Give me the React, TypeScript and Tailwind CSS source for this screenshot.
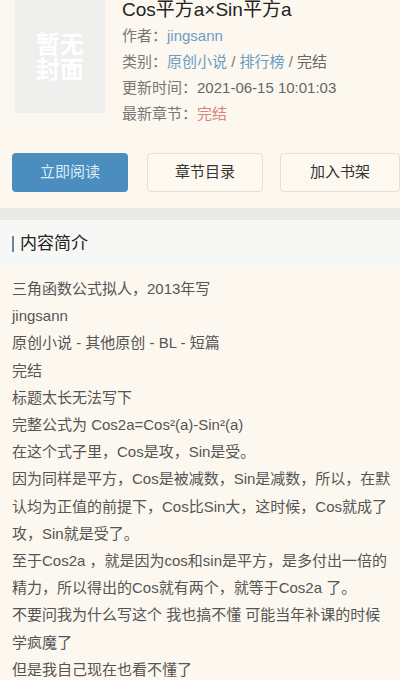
const lines = [
  "三角函数公式拟人，2013年写",
  "jingsann",
  "原创小说 - 其他原创 - BL - 短篇",
  "完结",
  "标题太长无法写下",
  "完整公式为 Cos2a=Cos²(a)-Sin²(a)",
  "在这个式子里，Cos是攻，Sin是受。",
  "因为同样是平方，Cos是被减数，Sin是减数，所以，在默认均为正值的前提下，Cos比Sin大，这时候，Cos就成了攻，Sin就是受了。",
  "至于Cos2a ，就是因为cos和sin是平方，是多付出一倍的精力，所以得出的Cos就有两个，就等于Cos2a 了。",
  "不要问我为什么写这个 我也搞不懂 可能当年补课的时候学疯魔了",
  "但是我自己现在也看不懂了",
];

export default function App() {
  return (
    <div
      className="w-[400px] h-[680px] overflow-hidden bg-[#fcf8ef]"
      style={{ fontFamily: '"Liberation Sans", "Noto Sans CJK SC", sans-serif' }}
    >
      {/* book info */}
      <div className="flex gap-[17px] pl-[15px]">
        <div className="w-[90px] h-[113px] bg-[#efefed] flex flex-col items-center justify-center text-white font-bold text-[24px] leading-[25px]">
          <span>暂无</span>
          <span>封面</span>
        </div>
        <div className="flex flex-col text-[15px] leading-[26px] text-[#777]">
          <h1 className="text-[19px] leading-[20px] mb-[3px] text-[#222]">Cos平方a×Sin平方a</h1>
          <div>
            作者：<span className="text-[#6b9cc3]">jingsann</span>
          </div>
          <div>
            类别：<span className="text-[#6b9cc3]">原创小说</span> / <span className="text-[#6b9cc3]">排行榜</span> / <span className="text-[#666]">完结</span>
          </div>
          <div>
            更新时间：<span className="text-[#666]">2021-06-15 10:01:03</span>
          </div>
          <div>
            最新章节：<span className="text-[#d9827a]">完结</span>
          </div>
        </div>
      </div>

      {/* actions */}
      <div className="flex pl-3 mt-[26px] text-[15px]">
        <button className="w-[116px] h-[39px] rounded bg-[#4b8dbf] text-[#dcecf7]">立即阅读</button>
        <button className="w-[116px] h-[39px] ml-[19px] rounded border border-[#e6dfd3] bg-[#fdf9f1] text-[#333]">章节目录</button>
        <button className="w-[120px] h-[39px] ml-[17px] rounded border border-[#e6dfd3] bg-[#fdf9f1] text-[#333]">加入书架</button>
      </div>

      <div className="h-3 mt-4 bg-[#e9e9e7]" />

      <div className="h-[47px] bg-[#f7f7f5] flex items-center pl-3">
        <span className="w-[2px] h-[16px] bg-[#5d8aa6]" />
        <span className="ml-[6px] text-[17px] text-[#222]">内容简介</span>
      </div>

      {/* intro text */}
      <div className="pl-3 pr-2 pt-[8px] text-[15px] leading-[27.2px] text-[#555]">
        {lines.map((t, i) => (
          <p key={i}>{t}</p>
        ))}
      </div>
    </div>
  );
}
